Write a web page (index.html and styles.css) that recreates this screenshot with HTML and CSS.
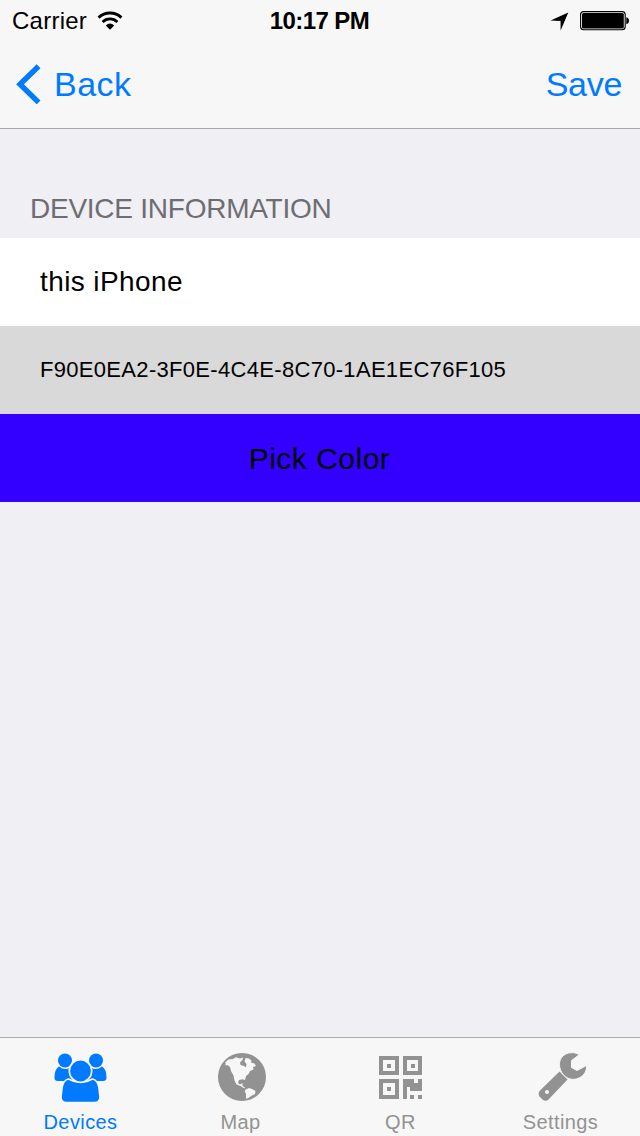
FILE: index.html
```html
<!DOCTYPE html>
<html lang="en">
<head>
<meta charset="utf-8">
<title>Device Information</title>
<link rel="stylesheet" href="styles.css">
</head>
<body>
<div class="screen">
  <header class="top">
    <div class="status">
      <div class="status-left">
        <span class="carrier">Carrier</span>
        <svg class="wifi" width="26" height="20" viewBox="0 0 26 20">
          <path d="M1.6 6.6A16.500 16.500 0 0 1 24.400 6.600" fill="none" stroke="#000" stroke-width="3"/>
          <path d="M5.600 10.900A10.600 10.600 0 0 1 20.400 10.900" fill="none" stroke="#000" stroke-width="2.800"/>
          <path d="M8.800 14.400Q13 10.800 17.200 14.400L13 18.800Z" fill="#000"/>
        </svg>
      </div>
      <span class="time">10:17 PM</span>
      <div class="status-right">
        <svg width="19" height="19" viewBox="0 0 19 19"><path d="M18.3 .6L10.6 18.5V8.900L.6 8.600Z" fill="#000"/></svg>
        <svg width="50" height="20" viewBox="0 0 50 20">
          <rect x=".6" y=".6" width="44.6" height="18.2" rx="3" fill="none" stroke="#000" stroke-width="1.1"/>
          <rect x="2" y="2" width="41.8" height="15.4" rx="1.5" fill="#000"/>
          <path d="M46.3 6.2Q49 6.800 49 9.700T46.300 13.200Z" fill="#000"/>
        </svg>
      </div>
    </div>
    <nav class="nav">
      <a class="back"><svg width="25" height="40" viewBox="0 0 25 40"><path d="M22.6 2.2L4 20.300L22.600 38.400" fill="none" stroke="#007aff" stroke-width="5.400"/></svg><span>Back</span></a>
      <a class="save">Save</a>
    </nav>
  </header>
  <main class="content">
    <h1 class="section-title">DEVICE INFORMATION</h1>
    <div class="row name">this iPhone</div>
    <div class="row uuid">F90E0EA2-3F0E-4C4E-8C70-1AE1EC76F105</div>
    <div class="row pick"><span>Pick Color</span></div>
  </main>
  <footer class="tabs">
    <a class="tab active">
      <svg class="icon" viewBox="50 1050 60 56">
        <g fill="currentColor">
          <circle cx="65" cy="1060.5" r="7"/><circle cx="96" cy="1060.5" r="7"/>
          <path d="M59 1066.5Q65 1071 70 1067.5L74 1081H58Q54.500 1081 54.500 1078Q54.500 1069 59 1066.500Z"/>
          <path d="M102 1066.500Q96 1071 91 1067.500L87 1081H103Q106.500 1081 106.500 1078Q106.500 1069 102 1066.500Z"/>
        </g>
        <g fill="currentColor" stroke="#f7f7f7" stroke-width="1.6">
          <path d="M68.500 1079Q80.500 1086 92.500 1079Q97.500 1080 98.800 1087L100 1097Q100 1102.500 94.500 1102.500H66.500Q61 1102.500 61 1097L62.200 1087Q63.500 1080 68.500 1079Z"/>
          <circle cx="80.500" cy="1071" r="11.200"/>
        </g>
      </svg>
      <span>Devices</span>
    </a>
    <a class="tab">
      <svg class="icon" viewBox="210 1050 60 56">
        <circle cx="242" cy="1077" r="24" fill="currentColor"/>
        <path fill="#f7f7f7" d="M225.500 1062L228.500 1059.500L233 1059L236 1057.300L240 1058.500L243 1057.500L242.500 1060L240 1062.500L240.500 1065L244 1066L246 1067.500L246.500 1064L244.500 1061.500L245.500 1058L249 1058.500L251.500 1060.500L251 1062.500L254.500 1063.500L256 1066L253 1067L253.500 1069.500L250 1071L248.500 1074L246 1076L245 1080L242.500 1079.300L239 1080L238 1083L240 1084.500L242.500 1083L242.500 1086L245 1087.500L244.500 1088.500L240.500 1086L236.500 1084.500L234.500 1080.500L233.500 1075.500L231 1071L230 1067L227.500 1065L225.500 1065.500Z"/>
        <path fill="#f7f7f7" d="M245.500 1089.500L249 1088L252 1089L255.500 1091L255 1094L251.500 1095.800L248 1098.300L246 1098.800L246 1094L244.800 1091.500Z"/>
      </svg>
      <span>Map</span>
    </a>
    <a class="tab">
      <svg class="icon" viewBox="370 1050 60 56" shape-rendering="crispEdges">
        <g fill="none" stroke="currentColor" stroke-width="4">
          <rect x="381" y="1058" width="16" height="15"/><rect x="405" y="1058" width="15" height="15"/><rect x="381" y="1081" width="16" height="16"/>
        </g>
        <g fill="currentColor">
          <rect x="387" y="1064" width="4" height="4"/><rect x="411" y="1064" width="4" height="4"/><rect x="387" y="1087" width="4" height="4"/>
          <path d="M403 1079H414V1083H418V1079H422V1091H410V1087H407V1099H403Z"/>
          <rect x="410" y="1095" width="4" height="4"/><rect x="418" y="1095" width="4" height="4"/>
        </g>
      </svg>
      <span>QR</span>
    </a>
    <a class="tab">
      <svg class="icon" viewBox="530 1050 60 56">
        <path fill="currentColor" d="M559.500 1071.500L567.500 1079.500L548.500 1099.500Q545.500 1102 542.500 1099.500L539.500 1096.500Q537.500 1093.500 540 1090.500Z"/>
        <circle cx="547" cy="1092" r="2" fill="#f7f7f7"/>
        <path fill="currentColor" stroke="#f7f7f7" stroke-width="1" d="M579.500 1054.500Q574 1051.500 568.500 1053C561 1055 557.500 1062 560.500 1070C563.500 1078 572 1081.500 579 1078C584.500 1075.500 587 1070 586.500 1065.500L577 1070.500L571.500 1067.500V1060.500Z"/>
      </svg>
      <span>Settings</span>
    </a>
  </footer>
</div>
</body>
</html>
```
FILE: styles.css
```css
* { box-sizing: border-box; }
body { margin: 0; font-family: "Liberation Sans", Arial, sans-serif; color: #000; }
svg { display: block; flex: none; }
.screen { width: 640px; height: 1136px; display: flex; flex-direction: column; background: #efeff4; }
.top { height: 129px; background: #f7f7f7; border-bottom: 1px solid #a9a9ac; }
.status { height: 40px; display: grid; grid-template-columns: 1fr auto 1fr; align-items: center; padding: 2px 11px 0 12px; font-size: 24px; line-height: 38px; }
.status-left { display: flex; align-items: center; gap: 10px; letter-spacing: .25px; }
.wifi { margin-bottom: 1px; }
.time { font-weight: bold; letter-spacing: -.6px; margin-right: 2px; }
.status-right { display: flex; justify-content: flex-end; align-items: center; gap: 11px; margin-right: -1px; }
.nav { height: 88px; display: flex; justify-content: space-between; align-items: center; padding: 0 18px 0 16px; color: #007aff; font-size: 34px; line-height: 40px; }
.back { display: flex; align-items: center; gap: 13px; letter-spacing: .5px; }
.save { letter-spacing: -.3px; }
.content { flex: 1; }
.section-title { margin: 0; height: 109px; padding: 64px 0 0 30px; font-size: 28px; font-weight: normal; line-height: 32px; letter-spacing: -.25px; color: #6d6d72; }
.row { height: 88px; display: flex; align-items: center; padding: 0 40px; }
.name { background: #fff; font-size: 28px; letter-spacing: .4px; }
.uuid { background: #d9d9d9; font-size: 22px; letter-spacing: .31px; }
.pick { background: #3300ff; justify-content: center; font-size: 30px; letter-spacing: .5px; padding: 2px 41px 0 40px; }
.tabs { height: 99px; display: grid; grid-template-columns: repeat(4, 1fr); background: #f7f7f7; border-top: 1px solid #a9a9ac; }
.tab { display: flex; flex-direction: column; align-items: center; padding-top: 12px; color: #929292; font-size: 20px; line-height: 24px; letter-spacing: .4px; }
.tab span { margin-left: 1px; }
.tab.active { color: #007aff; }
.icon { width: 60px; height: 56px; margin-bottom: 4px; }
```
